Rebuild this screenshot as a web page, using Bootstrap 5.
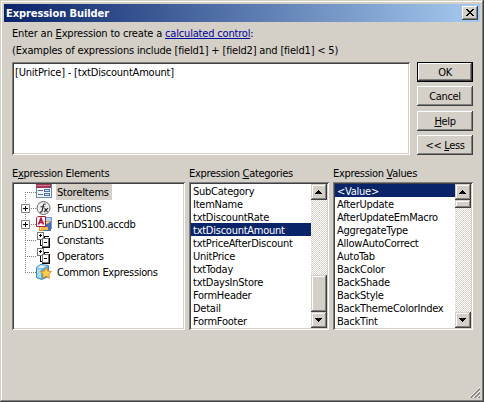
<!DOCTYPE html>
<html lang="en">
<head>
  <meta charset="UTF-8" />
  <meta name="viewport" content="width=device-width, initial-scale=1.0">
  <title>Expression Builder</title>
  <link href="https://cdn.jsdelivr.net/npm/bootstrap@5.3.0/dist/css/bootstrap.min.css" rel="stylesheet">
  <style>
    body {
      background-color: #d4d0c8;
      color: #000;
      font-family: Tahoma, "DejaVu Sans Condensed", "DejaVu Sans", sans-serif;
      font-stretch: condensed;
      font-size: 11px;
      line-height: 13px;
      letter-spacing: -0.25px;
      overflow: hidden;
      white-space: nowrap;
    }
    u { text-underline-offset: 1px; }
    .dialog-box {
      width: 484px;
      height: 402px;
      padding: 2px;
      background: #d4d0c8;
      box-shadow: inset -1px -1px #404040, inset 1px 1px #d4d0c8, inset -2px -2px #808080, inset 2px 2px #fff;
    }
    .title-bar {
      height: 18px;
      margin: 2px 2px 0;
      padding: 0 2px;
      background: linear-gradient(to right, #0a246a, #a6caf0);
      color: #fff;
      font-weight: bold;
      letter-spacing: -0.07px;
    }
    .raised {
      background: #d4d0c8;
      border: 0;
      border-radius: 0;
      box-shadow: inset -1px -1px #404040, inset 1px 1px #fff, inset -2px -2px #808080;
    }
    .close-btn { width: 16px; height: 14px; padding: 0; }
    .intro { padding: 3px 10px 0; line-height: 17px; height: 40px; letter-spacing: -0.18px; }
    .intro a { color: #00009c; text-underline-offset: 1px; }
    .upper { padding: 0 9px 0 10px; height: 93px; }
    .sunken {
      background: #fff;
      padding: 2px;
      box-shadow: inset 1px 1px #808080, inset -1px -1px #fff, inset 2px 2px #404040, inset -2px -2px #d4d0c8;
    }
    .expr-input { width: 398px; padding: 4px 3px; letter-spacing: -0.2px; }
    .btn-col { width: 56px; }
    .dlg-btn {
      height: 20px;
      padding: 1px 0 0;
      color: #000;
      font-size: 11px;
      line-height: 13px;
      letter-spacing: -0.35px;
    }
    .dlg-btn.main-btn {
      box-shadow: inset 0 0 0 1px #000, inset -2px -2px #404040, inset 2px 2px #fff, inset -3px -3px #808080;
    }
    .gap-help { margin-top: 1px; }
    .lower { padding: 12px 9px 0 10px; gap: 4px; }
    .lower label { height: 15px; display: block; letter-spacing: -0.3px; }
    .pane { height: 148px; }
    .pane-tree { width: 173px; }
    .pane-list { width: 140px; }
    .tree-row { height: 16px; padding-left: 7px; letter-spacing: -0.33px; }
    .tree-row svg { flex: none; }
    .tree-row span { height: 16px; padding: 2px 3px 0 1px; margin-left: 4px; }
    .tree-row .picked { background: #d4d0c8; letter-spacing: -0.2px; }
    .rows > div { height: 13px; padding-left: 2px; line-height: 15px; }
    .rows > .chosen { background: #0a246a; color: #fff; }
    .scroll-track {
      width: 16px;
      background: repeating-conic-gradient(#fff 0 25%, #d4d0c8 0 50%) 0 0 / 2px 2px;
    }
    .arrow { height: 16px; width: 16px; flex: none; }
    .thumb, .arrow {
      background: #d4d0c8;
      box-shadow: inset -1px -1px #404040, inset 1px 1px #d4d0c8, inset -2px -2px #808080, inset 2px 2px #fff;
    }
    .thumb-low { height: 37px; }
    .thumb-top { height: 8px; }
    .grip { right: 4px; bottom: 4px; }
  </style>
</head>
<body>

<div class="dialog-box position-relative">
  <div class="title-bar d-flex align-items-center justify-content-between">
    <span>Expression Builder</span>
    <button class="raised close-btn d-flex" aria-label="Close">
      <svg width="16" height="14" shape-rendering="crispEdges"><path d="M4 3h2v1h1v1h2V4h1V3h2v1h-1v1h-1v1H9v1h1v1h1v1h1v1h-2V9H9V8H7v1H6v1H4V9h1V8h1V7h1V6H6V5H5V4H4z"/></svg>
    </button>
  </div>

  <div class="intro">
    <div class="line-one">Enter an <u>E</u>xpression to create a <a href="#">calculated control</a>:</div>
    <div class="line-two">(Examples of expressions include [field1] + [field2] and [field1] &lt; 5)</div>
  </div>

  <div class="upper d-flex justify-content-between">
    <div class="sunken expr-input">[UnitPrice] - [txtDiscountAmount]</div>
    <div class="btn-col d-flex flex-column gap-1">
      <button class="btn raised dlg-btn main-btn">OK</button>
      <button class="btn raised dlg-btn">Cancel</button>
      <button class="btn raised dlg-btn gap-help"><u>H</u>elp</button>
      <button class="btn raised dlg-btn">&lt;&lt; <u>L</u>ess</button>
    </div>
  </div>

  <div class="lower d-flex">
    <div class="pane-tree">
      <label>E<u>x</u>pression Elements</label>
      <div class="sunken pane">
        <div class="tree-row d-flex">
          <svg width="31" height="16" shape-rendering="crispEdges">
            <path d="M4.5 8v8M4 8.5h11" stroke="#808080" stroke-dasharray="1 1" fill="none"/>
            <path d="M15 0h16v14H15z" fill="#6683b4"/><path d="M15 0h15v4H15z" fill="#a23557"/>
            <path d="M16 1h13v1H16z" fill="#cc7892"/><path d="M16 4h14v9H16z" fill="#f1f5fc"/>
            <path d="M17 6h5v1h-5zM17 10h5v1h-5z" fill="#56698c"/><path d="M23 5h6v3h-6zM23 9h6v3h-6z" fill="#536fa2"/>
            <path d="M24 6h4v1h-4zM24 10h4v1h-4z" fill="#dce8fa"/>
          </svg>
          <span class="picked">StoreItems</span>
        </div>
        <div class="tree-row d-flex">
          <svg width="31" height="16">
            <path d="M4.5 0v16M4 8.5h11" stroke="#808080" stroke-dasharray="1 1" fill="none" shape-rendering="crispEdges"/>
            <path d="M.5 4.500h8v8h-8z" fill="#fff" stroke="#808080"/><path d="M2 8.500h5M4.500 6v5" stroke="#000"/>
            <circle cx="22.500" cy="8" r="6.500" fill="#eee" stroke="#666"/>
            <path d="M24.500 4.200c-2.500-1-2.200 1.500-3.300 6.200-.3 1.500-1 2-2.200 1.500M19.600 6.800h4M23.500 8.200l3 3.800M27 8.200l-4 3.800" fill="none" stroke="#222" stroke-width="1.100"/>
          </svg>
          <span>Functions</span>
        </div>
        <div class="tree-row d-flex">
          <svg width="31" height="16">
            <path d="M4.5 0v16M4 8.5h11" stroke="#808080" stroke-dasharray="1 1" fill="none" shape-rendering="crispEdges"/>
            <path d="M.5 4.500h8v8h-8z" fill="#fff" stroke="#808080"/><path d="M2 8.500h5M4.500 6v5" stroke="#000"/>
            <path d="M19 1h12v12H19z" fill="#6f96d2"/><path d="M23 2h7v3h-7z" fill="#b9d2f4"/>
            <path d="M18 5h11v10H18z" fill="#e59a27"/><path d="M19 6h9v8h-9z" fill="#fbdc8d"/>
            <path d="M25 8l5-2v9h-8z" fill="#4a6faf"/><path d="M20 11h7v3h-7z" fill="#f4b74c"/>
            <path d="M17 .5h7.500v10h-9V2z" fill="#fff" stroke="#a51c40"/>
            <path d="M17.500 8.500L20 2.500l2.500 6M18.300 6.500h3.400" fill="none" stroke="#b4113a" stroke-width="1.700"/>
          </svg>
          <span>FunDS100.accdb</span>
        </div>
        <div class="tree-row d-flex">
          <svg width="31" height="16" shape-rendering="crispEdges">
            <path d="M4.5 0v16M4 8.5h11" stroke="#808080" stroke-dasharray="1 1" fill="none"/>
            <path d="M16.500.5h6v7h-6z" fill="#fff" stroke="#777"/><path d="M18 3.500h3M19.500 2v3" stroke="#000"/>
            <path d="M23 8V4.500h5M19.500 8v5h2" fill="none" stroke="#000"/>
            <path d="M21.500 6.500h6v8h-6z" fill="#fff" stroke="#777"/><path d="M28.500 6v9.500H21" fill="none" stroke="#000"/><path d="M23 10.500h3" stroke="#000"/>
          </svg>
          <span>Constants</span>
        </div>
        <div class="tree-row d-flex">
          <svg width="31" height="16" shape-rendering="crispEdges">
            <path d="M4.5 0v16M4 8.5h11" stroke="#808080" stroke-dasharray="1 1" fill="none"/>
            <path d="M16.500.5h6v7h-6z" fill="#fff" stroke="#777"/><path d="M18 3.500h3M19.500 2v3" stroke="#000"/>
            <path d="M23 8V4.500h5M19.500 8v5h2" fill="none" stroke="#000"/>
            <path d="M21.500 6.500h6v8h-6z" fill="#fff" stroke="#777"/><path d="M28.500 6v9.500H21" fill="none" stroke="#000"/><path d="M23 10.500h3" stroke="#000"/>
          </svg>
          <span>Operators</span>
        </div>
        <div class="tree-row d-flex">
          <svg width="31" height="16">
            <path d="M4.5 0v8M4 8.5h11" stroke="#808080" stroke-dasharray="1 1" fill="none" shape-rendering="crispEdges"/>
            <path d="M15.500 3.500l4-3 8 1v11l-7 3-5-2z" fill="#5eb1da" stroke="#3586b5"/>
            <path d="M16 3.500l4-2.500 6 1-5 2.500z" fill="#d5f0fc"/><path d="M16 4l4 1v9.500l-4-1.500z" fill="#a9d9f0"/>
            <path d="M25 3.500l1.700 3.600 3.900.4-2.800 2.700.8 4-3.600-2-3.600 2 .8-4-2.800-2.700 3.900-.4z" fill="#ffd24a" stroke="#d87b16" stroke-width=".8"/>
          </svg>
          <span>Common Expressions</span>
        </div>
      </div>
    </div>

    <div class="pane-list">
      <label>Expression <u>C</u>ategories</label>
      <div class="sunken pane d-flex">
        <div class="rows flex-grow-1">
          <div>SubCategory</div>
          <div>ItemName</div>
          <div>txtDiscountRate</div>
          <div class="chosen">txtDiscountAmount</div>
          <div>txtPriceAfterDiscount</div>
          <div>UnitPrice</div>
          <div>txtToday</div>
          <div>txtDaysInStore</div>
          <div>FormHeader</div>
          <div>Detail</div>
          <div>FormFooter</div>
        </div>
        <div class="scroll-track d-flex flex-column">
          <svg class="arrow" shape-rendering="crispEdges"><path d="M7 6h1v1h1v1h1v1h1v1H4V9h1V8h1V7h1z"/></svg>
          <div class="thumb thumb-low mt-auto"></div>
          <svg class="arrow" shape-rendering="crispEdges"><path d="M4 6h7v1h-1v1H9v1H8v1H7V9H6V8H5V7H4z"/></svg>
        </div>
      </div>
    </div>

    <div class="pane-list">
      <label>Expression <u>V</u>alues</label>
      <div class="sunken pane d-flex">
        <div class="rows flex-grow-1">
          <div class="chosen">&lt;Value&gt;</div>
          <div>AfterUpdate</div>
          <div>AfterUpdateEmMacro</div>
          <div>AggregateType</div>
          <div>AllowAutoCorrect</div>
          <div>AutoTab</div>
          <div>BackColor</div>
          <div>BackShade</div>
          <div>BackStyle</div>
          <div>BackThemeColorIndex</div>
          <div>BackTint</div>
        </div>
        <div class="scroll-track d-flex flex-column">
          <svg class="arrow" shape-rendering="crispEdges"><path d="M7 6h1v1h1v1h1v1h1v1H4V9h1V8h1V7h1z"/></svg>
          <div class="thumb thumb-top"></div>
          <svg class="arrow mt-auto" shape-rendering="crispEdges"><path d="M4 6h7v1h-1v1H9v1H8v1H7V9H6V8H5V7H4z"/></svg>
        </div>
      </div>
    </div>
  </div>

  <!-- resize grip -->
  <svg class="grip position-absolute" width="11" height="11">
    <path d="M0 11L11 0M4 11l7-7M8 11l3-3" stroke="#fff" stroke-width="1"/>
    <path d="M1.500 11L11 1.500M5.500 11L11 5.500M9.500 11L11 9.500" stroke="#808080" stroke-width="1.500"/>
  </svg>
</div>

<script src="https://cdn.jsdelivr.net/npm/bootstrap@5.3.0/dist/js/bootstrap.bundle.min.js"></script>
</body>
</html>
